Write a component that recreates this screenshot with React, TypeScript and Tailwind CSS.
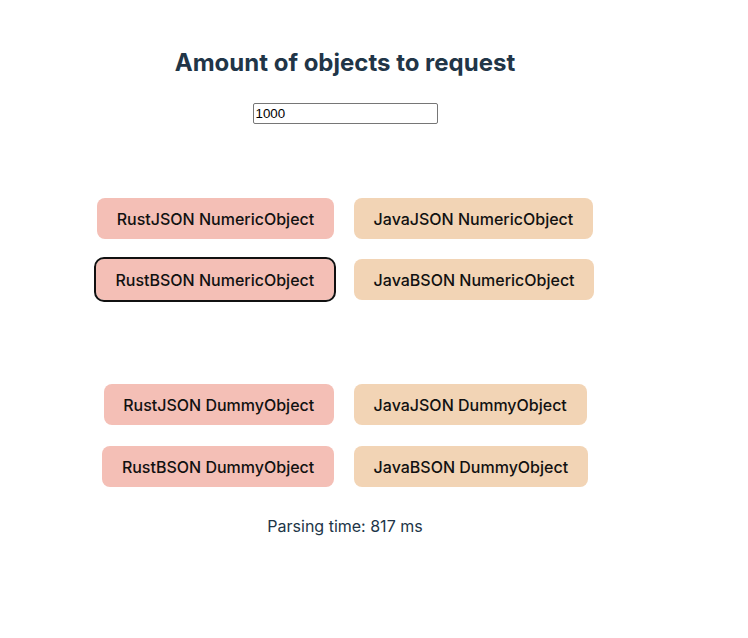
const ROWS: { rust: string; java: string; focused?: boolean }[][] = [
  [
    { rust: "RustJSON NumericObject", java: "JavaJSON NumericObject" },
    { rust: "RustBSON NumericObject", java: "JavaBSON NumericObject", focused: true },
  ],
  [
    { rust: "RustJSON DummyObject", java: "JavaJSON DummyObject" },
    { rust: "RustBSON DummyObject", java: "JavaBSON DummyObject" },
  ],
];

function Btn({ label, kind, focused }: { label: string; kind: "rust" | "java"; focused?: boolean }) {
  return (
    <button
      className={`h-[41px] rounded-lg border border-transparent px-[18.7px] text-[16px] font-[450] text-[#111] ${
        kind === "rust" ? "bg-[#f4bfb6]" : "bg-[#f2d4b5]"
      } ${focused ? "outline-2 outline-[#111]" : ""}`}
    >
      {label}
    </button>
  );
}

export default function App() {
  return (
    <div className="w-[690px] bg-white pt-[47px] text-center font-['Inter',sans-serif] text-[#213547]">
      <h2 className="text-[24px] font-bold leading-[32px]">Amount of objects to request</h2>

      <div className="mt-[24px] flex justify-center">
        <input
          defaultValue="1000"
          className="h-[21px] w-[185px] rounded-[2px] border border-[#767676] px-[2px] font-['Liberation_Sans',Arial,sans-serif] text-[13.33px] text-black"
        />
      </div>

      {ROWS.map((group, gi) => (
        <div key={gi} className={`flex flex-col gap-5 ${gi === 0 ? "mt-[74px]" : "mt-[84px]"}`}>
          {group.map((row, ri) => (
            <div key={row.rust} className={`flex justify-center gap-5 ${gi === 1 && ri === 1 ? "mt-px" : ""}`}>
              <Btn label={row.rust} kind="rust" focused={row.focused} />
              <Btn label={row.java} kind="java" />
            </div>
          ))}
        </div>
      ))}

      <p className="mt-[27px] text-[16px] leading-6">Parsing time: 817 ms</p>
    </div>
  );
}
